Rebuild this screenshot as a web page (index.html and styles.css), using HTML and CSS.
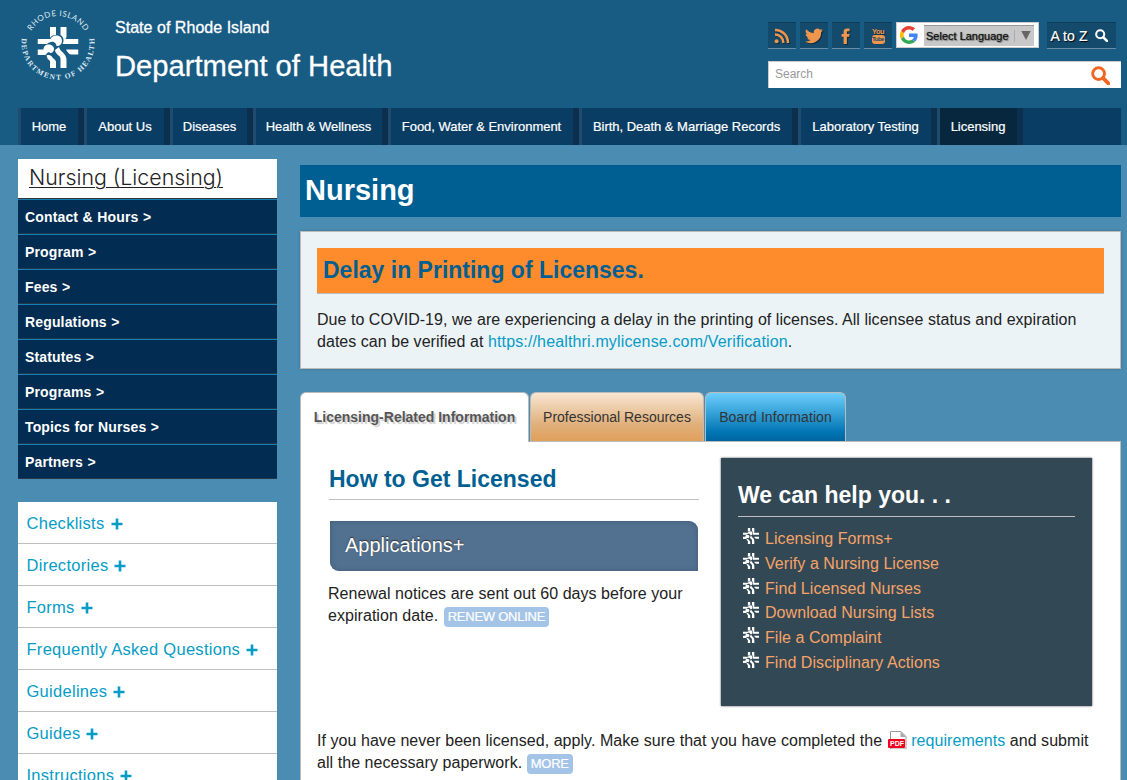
FILE: index.html
```html
<!DOCTYPE html>
<html lang="en">
<head>
<meta charset="utf-8">
<title>Nursing: Department of Health</title>
<link rel="stylesheet" href="styles.css">
</head>
<body>
<svg width="0" height="0" class="defs">
  <symbol id="mark" viewBox="0 0 41 41">
    <path d="M12.500 0h6v8c-3 0-5 1-6 3z"/>
    <path d="M23 0h6v10l-1 2h13v5H25c2-4 1-7-2-9z"/>
    <path d="M0 12h13c1-2 3-3.500 6-3.500 3.500 0 5.500 2.500 5.500 5.200 0 3-2 5.300-5.500 5.300 0-3-3-5-6-4-1.500.5-2.500 1-3.500 2H0z"/>
    <path d="M0 22.500h6c0-3 2-5 5-5s5.500 2 5.500 4.500c0 2-1.500 4-3.500 4-1-1-3-1-4 1l-1 1H0z"/>
    <path d="M9 28.500c3-1 5 0 6 2 1 1.500 3.500 2 3.500 5V41h-6v-7c-2-1.500-3-3-3.500-5.500z"/>
    <path d="M17.500 23l4-3c1 5 7.500 6 7.500 13v8h-6v-9c0-4-5-4-5.500-9z"/>
    <path d="M28.500 22.500H41v5h-7c-2 0-4-2-5.500-5z"/>
  </symbol>
  <symbol id="lens" viewBox="0 0 18 18">
    <circle cx="7.2" cy="7.2" r="5.6" fill="none" stroke="currentColor" stroke-width="2.8"/>
    <path d="M11.5 11.5l5 5" stroke="currentColor" stroke-width="3.6" stroke-linecap="round"/>
  </symbol>
  <symbol id="plus" viewBox="0 0 12 12"><path d="M4.7 .5h2.6v4.2h4.2v2.6H7.3v4.2H4.7V7.3H.5V4.7h4.2z"/></symbol>
</svg>

<header class="header">
  <div class="brand">
    <svg class="seal" width="78" height="78" viewBox="0 0 78 78">
      <path id="arcTop" d="M8 39a31 31 0 0 1 62 0" fill="none"/>
      <path id="arcBottom" d="M6.500 18.500a36.500 36.500 0 1 0 65 0" fill="none"/>
      <text class="seal-top"><textPath href="#arcTop" startOffset="50%" text-anchor="middle" textLength="64">RHODE ISLAND</textPath></text>
      <text class="seal-bottom"><textPath href="#arcBottom" startOffset="50%" text-anchor="middle" textLength="124">DEPARTMENT OF HEALTH</textPath></text>
      <use href="#mark" x="18.5" y="19" width="41" height="41"/>
    </svg>
    <div class="brand-text">
      <div class="state">State of Rhode Island</div>
      <div class="dept">Department of Health</div>
    </div>
  </div>
  <div class="tools">
    <div class="tool-row">
      <a class="social"><svg width="16" height="16" viewBox="0 0 16 16"><circle cx="2.6" cy="13.2" r="2"/><path d="M1 6.5a8.4 8.4 0 0 1 8.4 8.5M1 1.9A13 13 0 0 1 14 15" fill="none" stroke="currentColor" stroke-width="2.5"/></svg></a>
      <a class="social"><svg width="18" height="16" viewBox="0 0 24 20"><path d="M24 2.4c-.9.4-1.8.7-2.8.8a5 5 0 0 0 2.1-2.7c-1 .6-2 1-3.1 1.200a4.900 4.900 0 0 0-8.400 4.500A14 14 0 0 1 1.700 1a4.900 4.900 0 0 0 1.500 6.600c-.8 0-1.600-.2-2.200-.6a4.900 4.900 0 0 0 3.900 4.900c-.7.200-1.500.200-2.200.1a4.900 4.900 0 0 0 4.600 3.400A9.900 9.900 0 0 1 0 17.400 14 14 0 0 0 21.500 5c1-.7 1.800-1.600 2.500-2.600z"/></svg></a>
      <a class="social"><svg width="10" height="16" viewBox="0 0 10 16"><path d="M2.600 16V8.800H.6V6h2V4C2.600 1.500 4 .6 6 .6h2.600v2.700H7C6.100 3.300 5.900 3.700 5.900 4.400V6h2.700l-.4 2.800H5.900V16z"/></svg></a>
      <a class="social tube"><span class="you">You</span><span class="tub">Tube</span></a>
      <div class="translate">
        <svg width="18" height="18" viewBox="0 0 48 48"><path fill="#ea4335" d="M24 9.500c3.500 0 6.700 1.200 9.200 3.600l6.900-6.900C35.900 2.400 30.500 0 24 0 14.600 0 6.500 5.400 2.600 13.200l8 6.200C12.400 13.700 17.700 9.500 24 9.500z"/><path fill="#4285f4" d="M47 24.600c0-1.600-.2-3.100-.4-4.600H24v9h12.900c-.6 3-2.300 5.500-4.800 7.200l7.700 6C44.400 38 47 31.800 47 24.600z"/><path fill="#fbbc05" d="M10.500 28.600a14.500 14.500 0 0 1 0-9.200l-8-6.200a24 24 0 0 0 0 21.600z"/><path fill="#34a853" d="M24 48c6.500 0 11.900-2.100 15.900-5.800l-7.700-6c-2.200 1.500-4.900 2.300-8.200 2.300-6.300 0-11.600-4.200-13.500-9.900l-8 6.200C6.500 42.600 14.600 48 24 48z"/></svg>
        <div class="select"><span>Select Language</span><i></i><svg width="10" height="9" viewBox="0 0 10 9"><path d="M.3 0h9.400L5 9z" fill="#666"/></svg></div>
      </div>
      <a class="atoz">A to Z <svg width="13" height="13"><use href="#lens"/></svg></a>
    </div>
    <div class="search"><span>Search</span><svg width="19" height="19"><use href="#lens"/></svg></div>
  </div>
</header>

<div class="nav-wrap">
  <nav class="nav">
    <a>Home</a><a>About Us</a><a>Diseases</a><a>Health &amp; Wellness</a><a>Food, Water &amp; Environment</a><a>Birth, Death &amp; Marriage Records</a><a>Laboratory Testing</a><a class="current">Licensing</a>
  </nav>
</div>

<div class="page">
  <aside class="side">
    <h2 class="side-title"><a>Nursing (Licensing)</a></h2>
    <ul class="side-nav">
      <li>Contact &amp; Hours &gt;</li><li>Program &gt;</li><li>Fees &gt;</li><li>Regulations &gt;</li><li>Statutes &gt;</li><li>Programs &gt;</li><li>Topics for Nurses &gt;</li><li>Partners &gt;</li>
    </ul>
    <ul class="side-docs">
      <li>Checklists<svg><use href="#plus"/></svg></li>
      <li>Directories<svg><use href="#plus"/></svg></li>
      <li>Forms<svg><use href="#plus"/></svg></li>
      <li>Frequently Asked Questions<svg><use href="#plus"/></svg></li>
      <li>Guidelines<svg><use href="#plus"/></svg></li>
      <li>Guides<svg><use href="#plus"/></svg></li>
      <li>Instructions<svg><use href="#plus"/></svg></li>
    </ul>
  </aside>

  <main class="main">
    <h1 class="title">Nursing</h1>
    <section class="alert">
      <h2>Delay in Printing of Licenses.</h2>
      <p>Due to COVID-19, we are experiencing a delay in the printing of licenses. All licensee status and expiration<br>dates can be verified at <a>https://healthri.mylicense.com/Verification</a>.</p>
    </section>
    <div class="tabs">
      <a class="tab active">Licensing-Related Information</a>
      <a class="tab orange">Professional Resources</a>
      <a class="tab blue">Board Information</a>
    </div>
    <section class="panel">
      <div class="cols">
        <div class="licensed">
          <h2>How to Get Licensed</h2>
          <div class="apps">Applications+</div>
          <p>Renewal notices are sent out 60 days before your<br>expiration date. <span class="btn">RENEW ONLINE</span></p>
        </div>
        <div class="help">
          <h2>We can help you. . .</h2>
          <ul>
            <li><svg><use href="#mark"/></svg>Licensing Forms+</li>
            <li><svg><use href="#mark"/></svg>Verify a Nursing License</li>
            <li><svg><use href="#mark"/></svg>Find Licensed Nurses</li>
            <li><svg><use href="#mark"/></svg>Download Nursing Lists</li>
            <li><svg><use href="#mark"/></svg>File a Complaint</li>
            <li><svg><use href="#mark"/></svg>Find Disciplinary Actions</li>
          </ul>
        </div>
      </div>
      <p class="apply">If you have never been licensed, apply. Make sure that you have completed the <svg class="pdf" width="19" height="18" viewBox="0 0 19 18"><path d="M2.500 18V.5h10.500l5 5V18z" fill="#fff" stroke="#999"/><path d="M12.500 .5v5.500h5.500z" fill="#aaa"/><rect y="8" width="17" height="9" rx="1" fill="#f1001f"/><text x="2" y="15.200">PDF</text></svg> <a>requirements</a> and submit<br>all the necessary paperwork. <span class="btn">MORE</span></p>
    </section>
  </main>
</div>
</body>
</html>
```
FILE: styles.css
```css
* { box-sizing: border-box; }
body {
  margin: 0;
  height: 780px;
  overflow: hidden;
  background: #4b8db2;
  color: #222;
  font: 16px/22px "Liberation Sans", Arial, sans-serif;
}
h1, h2, p, ul { margin: 0; padding: 0; }
ul { list-style: none; }
.defs { position: absolute; }

.header {
  display: flex;
  justify-content: space-between;
  height: 108px;
  padding: 0 6px 0 19px;
  background: #185b83;
  color: #fff;
}
.brand { display: flex; gap: 18px; }
.seal { margin-top: 8px; fill: #fff; overflow: visible; }
.seal-top { font: 8px "Lato", sans-serif; fill: #dfe9f0; }
.seal-bottom { font: bold 7.500px "Liberation Serif", serif; fill: #dfe9f0; }
.brand-text { padding-top: 17px; -webkit-text-stroke: .3px #fff; }
.state { line-height: 22px; letter-spacing: .03px; }
.dept { margin-top: 9px; font-size: 29.200px; line-height: 36px; white-space: nowrap; }

.tools { width: 353px; padding-top: 22px; }
.tool-row { display: flex; height: 27px; }
.social, .atoz {
  display: flex;
  align-items: center;
  justify-content: center;
  background: #144a6b;
  border-top: 1px solid #0f3c59;
  border-bottom: 1px solid #6d8ba1;
}
.social { width: 28px; margin-right: 4px; color: #f0954c; fill: currentColor; }
.social svg { filter: drop-shadow(1px 1px 0 #0b2d44); }
.tube { flex-direction: column; font-weight: bold; text-shadow: 1px 1px 0 #0b2d44; }
.you { font-size: 7.500px; line-height: 7px; letter-spacing: -.6px; }
.tub { width: 13px; height: 9px; border-radius: 3px; background: #f0954c; color: #144a6b; font-size: 6px; line-height: 9px; text-align: center; text-shadow: none; letter-spacing: -.5px; }
.translate {
  display: flex;
  align-items: center;
  width: 143px;
  height: 26px;
  padding: 0 4px 0 3px;
  background: #fff;
  border: 1px solid #ccc;
}
.select {
  display: flex;
  align-items: center;
  width: 110px;
  height: 21px;
  margin-left: 6px;
  padding-left: 2px;
  background: #c8c8c8;
  border-top: 1px solid #999;
  color: #111;
  font-size: 11px;
  white-space: nowrap;
  text-shadow: 1px 1px 1px #777, 0 0 1px #333;
}
.select i { width: 1px; height: 12px; margin: 0 6px 0 5px; background: #aaa; }
.atoz { width: 69px; margin-left: 8px; padding-right: 5px; gap: 7px; font-size: 14px; letter-spacing: .1px; white-space: nowrap; text-shadow: 1px 1px 1px #000; -webkit-text-stroke: .2px #fff; }
.search {
  display: flex;
  align-items: center;
  justify-content: space-between;
  height: 27px;
  margin-top: 12px;
  padding: 0 11px 2px 6px;
  background: #fff;
  border: 1px solid #ccc;
  border-width: 1px 0 0 1px;
  color: #999;
  font-size: 12px;
}
.search svg { position: relative; top: 1px; color: #f26522; }

.nav-wrap { height: 37px; padding: 0 6px 0 18px; background: #185b83; }
.nav { display: flex; height: 37px; background: #0a3d63; }
.nav a {
  flex: none;
  padding-right: 1px;
  border-left: 3px solid #1f4b6e;
  border-right: 6px solid #0b2f4d;
  color: #fff;
  font-size: 13px;
  letter-spacing: -.02px;
  line-height: 37px;
  text-align: center;
  white-space: nowrap;
  -webkit-text-stroke: .2px #fff;
}
.nav a:nth-child(1) { width: 66px; }
.nav a:nth-child(2) { width: 86px; }
.nav a:nth-child(3) { width: 83px; }
.nav a:nth-child(4) { width: 135px; }
.nav a:nth-child(5) { width: 191px; }
.nav a:nth-child(6) { width: 219px; }
.nav a:nth-child(7) { width: 139px; }
.nav a:nth-child(8) { width: 86px; }
.nav .current { background: #07273e; }

.page { display: flex; gap: 23px; padding: 14px 6px 0 18px; }
.side { flex: none; width: 259px; }
.side-title {
  height: 40px;
  padding-left: 11px;
  background: #fff;
  border-bottom: 1px solid #333;
  font: 300 21.350px/37px Inter, "Liberation Sans", sans-serif;
}
.side-title a { text-decoration: underline; text-decoration-thickness: 1px; text-underline-offset: 2px; }
.side-nav li {
  height: 35px;
  padding-left: 7px;
  background: #022c51;
  border-top: 1px solid #1480b8;
  border-bottom: 1px solid #253848;
  color: #fff;
  font-size: 14px;
  font-weight: bold;
  letter-spacing: .15px;
  word-spacing: .4px;
  line-height: 34px;
}
.side-docs { margin-top: 23px; }
.side-docs li {
  display: flex;
  align-items: center;
  gap: 6px;
  height: 42px;
  padding: 1px 0 0 8.500px;
  background: #fff;
  border-bottom: 1px solid #bfbfbf;
  color: #069cc6;
  font-size: 16.500px;
  letter-spacing: .28px;
}
.side-docs svg { width: 12px; height: 12px; margin-top: 1px; fill: #069cc6; }

.main { flex: 1; padding-top: 6px; }
.title { height: 52px; padding-left: 5px; background: #005f92; color: #fff; font-size: 29px; line-height: 50px; }
.alert {
  height: 138px;
  margin-top: 14px;
  padding: 16px;
  background: #ebf3f7;
  border: 1px solid #bbb;
  box-shadow: 0 0 3px rgba(0, 0, 0, .2);
}
.alert h2 {
  height: 46px;
  margin-bottom: 15px;
  padding-left: 6px;
  background: #ff8c2c;
  border-bottom: 1px solid #bbb;
  color: #005f92;
  font-size: 23px;
  line-height: 44px;
}
.alert p, .apply { white-space: nowrap; letter-spacing: .04px; }
p a { color: #069cc6; }
.alert a { letter-spacing: .15px; }

.tabs { display: flex; gap: 1px; height: 50px; margin-top: 23px; position: relative; z-index: 1; }
.tab {
  height: 49px;
  border: 1px solid #bbb;
  border-bottom: 0;
  border-radius: 6px 6px 0 0;
  color: #333;
  font-size: 14px;
  line-height: 49px;
  text-align: center;
  white-space: nowrap;
}
.active { width: 229px; height: 50px; background: #fff; color: #555; font-weight: bold; text-shadow: 2px 2px 1px #ccc; }
.orange { width: 174px; background: linear-gradient(#f8e6d2, #e0b07c 65%, #e0a05a); }
.blue { width: 141px; background: linear-gradient(#6dcffc, #0075b4 82%, #00659f); letter-spacing: .08px; }
.panel { height: 360px; margin-top: -1px; padding: 16px 28px 0 16px; background: #fff; border: 1px solid #bbb; }
.cols { display: flex; justify-content: space-between; height: 248px; }
.licensed { width: 370px; margin-left: 12px; }
.licensed h2 { height: 42px; border-bottom: 1px solid #bfbfbf; color: #005f92; font-size: 23px; line-height: 42px; }
.apps {
  height: 50px;
  margin: 21px 1px 12px;
  padding-left: 15px;
  background: #52708f;
  border-radius: 0 9px 0 9px;
  box-shadow: inset 0 0 5px #3f5c7c;
  color: #fff;
  font-size: 20px;
  line-height: 48px;
  text-shadow: 0 -1px 1px #333;
}
.licensed p { margin-left: -1px; white-space: nowrap; letter-spacing: .05px; }
.licensed .btn { margin-left: 1px; }
.btn {
  display: inline-block;
  height: 20px;
  padding: 0 4px;
  border-radius: 4px;
  background: #a3c4e6;
  color: #fff;
  font-size: 13px;
  letter-spacing: -.25px;
  line-height: 20px;
  -webkit-text-stroke: .2px #fff;
}
.help { width: 371px; padding: 16px 17px; background: #334855; box-shadow: 0 0 2px #445; }
.help h2 { height: 43px; margin-bottom: 9px; border-bottom: 1px solid #bfbfbf; color: #fff; font-size: 23px; line-height: 42px; }
.help li { display: flex; height: 24.800px; padding-left: 5px; color: #f7a367; line-height: 25px; letter-spacing: .06px; white-space: nowrap; }
.help li svg { width: 16px; height: 16px; margin: 2px 6px 0 0; fill: #fff; }
.apply { margin-top: 24px; letter-spacing: .055px; }
.pdf { margin-left: 1px; vertical-align: -3px; }
.pdf text { font: bold 7px "Liberation Sans", sans-serif; fill: #fff; letter-spacing: 0; }
```
